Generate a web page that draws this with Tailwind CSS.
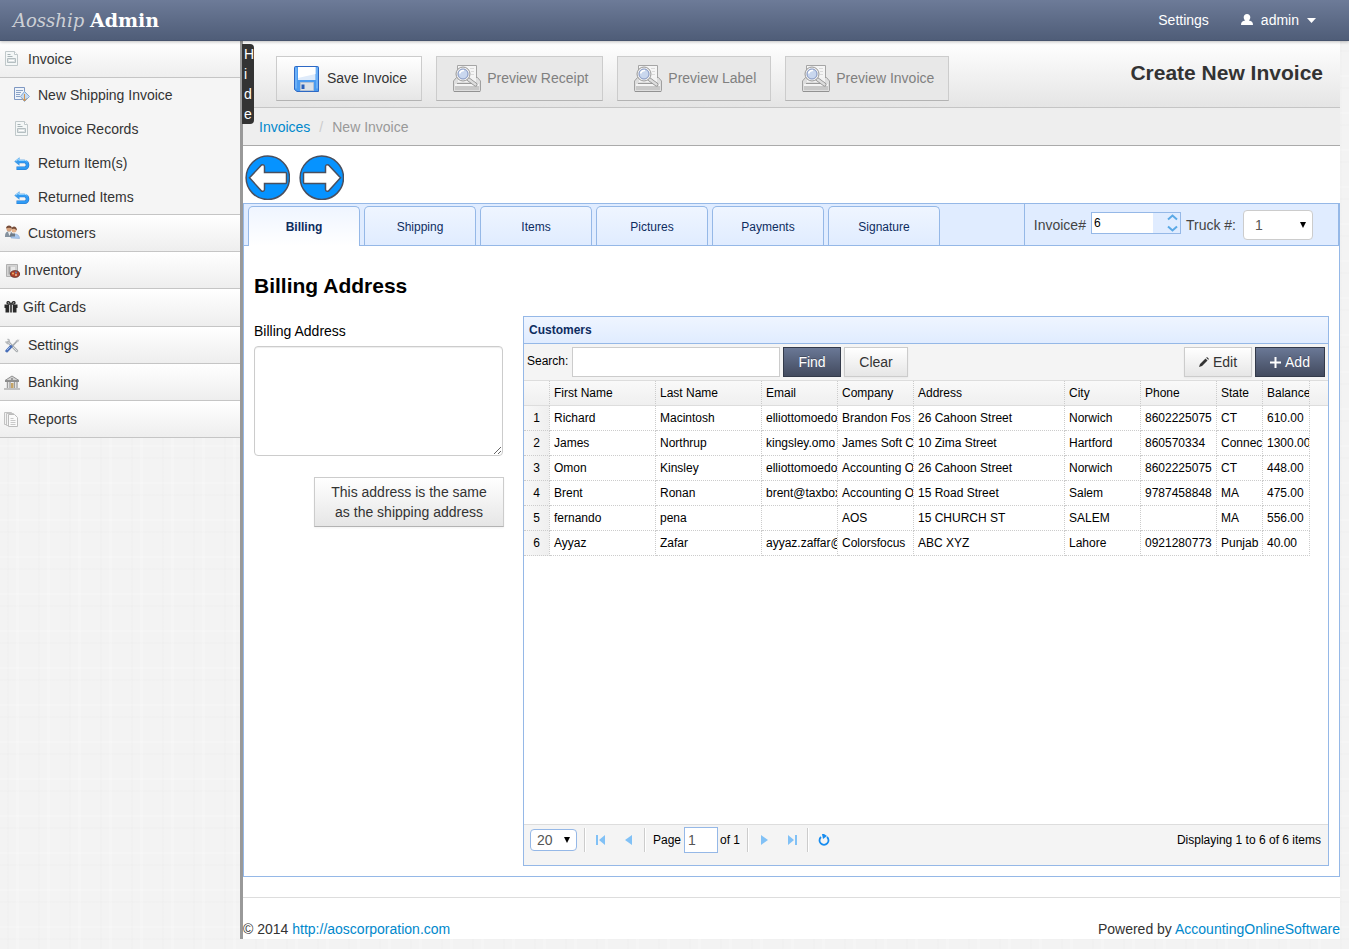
<!DOCTYPE html>
<html lang="en">

<head>
  <meta charset="UTF-8" />
  <meta name="viewport" content="width=device-width, initial-scale=1.0" />
  <title>Aosship Admin - Create New Invoice</title>
  <script src="https://cdn.jsdelivr.net/npm/@tailwindcss/browser@4"></script>

  <style>
    /* woven paper texture behind the sidebar and page edge */
    body {
      background-color: #f3f3f3;
      background-image:
        repeating-linear-gradient(90deg, transparent 0 7px, rgba(0, 0, 0, .006) 7px 9px, transparent 9px 16px, rgba(255, 255, 255, .18) 16px 19px, transparent 19px 31px),
        repeating-linear-gradient(0deg, transparent 0 9px, rgba(0, 0, 0, .006) 9px 11px, transparent 11px 21px, rgba(255, 255, 255, .18) 21px 23px, transparent 23px 37px);
    }
  </style>
</head>

<body class="flex min-h-screen flex-col font-['Liberation_Sans',Arial,sans-serif] text-sm leading-5 text-[#333]">

  <!-- Icon sprite -->
  <svg class="hidden">
    <symbol id="i-doc" viewBox="0 0 16 16">
      <path d="M1.500.500h9l3 3v11h-12z" fill="#f4f7f7" stroke="#c0c8ca" />
      <path d="M10.500.500v3h3" fill="#fff" stroke="#c0c8ca" />
      <path d="M3.500 3.500h3M3.500 5.500h5" stroke="#a9b4b7" />
      <path d="M3.500 7.500h8v4h-8z" fill="#dde2e3" stroke="#b4bec1" />
      <path d="M5 9.500h5" stroke="#fff" />
    </symbol>
    <symbol id="i-doc-go" viewBox="0 0 16 16">
      <path d="M.500.500h10v12h-10z" fill="#eef3fa" stroke="#7f98c2" />
      <path d="M2 3.500h7M2 5.500h5M2 7.500h4M2 9.500h4" stroke="#8ba3c6" />
      <path d="M10.500 4.500l5 5-5 5-4-5z" fill="#c4daf2" stroke="#86a8d2" />
      <path d="M10.500 7v7M8.500 11.500l2 2.500 2-2.500" fill="none" stroke="#cf9350" />
    </symbol>
    <symbol id="i-return" viewBox="0 0 16 16">
      <path d="M4 6.500h6.500a3 3.400 0 0 1 0 6.800H2.500" fill="none" stroke="#2478cf" stroke-width="3.600" />
      <path d="M.300 6.500L5.500 2.300v8.400z" fill="#3c9ae8" />
      <path d="M4 6.500h6.500a3 3.400 0 0 1 0 6.800H3" fill="none" stroke="#2f9bf5" stroke-width="2.400" />
      <path d="M1.800 6.200L4.800 3.800v1.500h5.700q2 0 3 1.500" fill="none" stroke="#a6dcff" />
    </symbol>
    <symbol id="i-users" viewBox="0 0 16 16">
      <path d="M1 12c0-4 1-5.500 4-5.500s4 1.500 4 5.500z" fill="#85929e" />
      <path d="M7 13c0-3 1.500-4 4-4s4.500 1.500 4.500 4.500z" fill="#a9c8ee" stroke="#799ccb" stroke-width=".5" />
      <path d="M6 8.500h5v3H6z" fill="#6f7b86" />
      <circle cx="5" cy="4" r="2.500" fill="#d8a37e" />
      <circle cx="10" cy="5" r="2.500" fill="#e4b38d" />
      <path d="M2 3.500c0-4 6-4 6 0C6 2.500 4 2.500 2 3.500zM7.500 4.500c0-4 5.500-4 5.500 1-2-2-4-2-5.500-1z" fill="#754b37" />
      <path d="M4 7l1.500 4L7 7z" fill="#eee" />
    </symbol>
    <symbol id="i-box" viewBox="0 0 16 16">
      <path d="M2.500 2.500h11v12h-11z" fill="#d3d3d3" stroke="#b0b0b0" />
      <path d="M4.500 4.500h7v8h-7z" fill="#a5a5a5" />
      <path d="M6.500 4.500h5v6h-5z" fill="#e8e8e8" />
      <ellipse cx="11" cy="12" rx="4.500" ry="3.300" fill="#b3442b" stroke="#6b3832" />
      <circle cx="9" cy="11.500" r="1" fill="#efb66b" /><circle cx="12" cy="10.500" r="1" fill="#6681b4" /><circle cx="12" cy="13" r="1" fill="#e8c5a0" />
    </symbol>
    <symbol id="i-gift" viewBox="0 0 14 14">
      <path d="M.500 4.500h4.700v3.500H.500zM8.800 4.500h4.700v3.500H8.800zM1.500 8h3.700v4.500H1.500zM8.800 8h3.700v4.500H8.800zM6.200 4.500h1.600v8H6.200z" fill="#292929" />
      <path d="M6.500 4C4.500 4.300 2.700 4 3 2.700S5.500 1 6.500 4zM7.500 4C9.500 4.300 11.300 4 11 2.700S8.500 1 7.500 4z" fill="none" stroke="#292929" stroke-width="1.300" />
    </symbol>
    <symbol id="i-tools" viewBox="0 0 16 16">
      <path d="M4 5l9 9" stroke="#a9adb0" stroke-width="2.500" stroke-linecap="round" />
      <path d="M4 5l9 9" stroke="#e2e4e6" stroke-linecap="round" />
      <path d="M1.500 4.500L3.500 6.500 5.500 5.500 5 3 3.500 2" fill="none" stroke="#b6b9bc" stroke-width="1.500" />
      <path d="M14 3L8 9.500" stroke="#a4a9ad" stroke-width="1.600" />
      <path d="M11.500 3.500l2.500 2 1.500-3z" fill="#c2c4c6" />
      <path d="M7 9.500L2.800 14" stroke="#496fb9" stroke-width="3" stroke-linecap="round" />
      <path d="M6 10L3 13" stroke="#9db8e8" />
    </symbol>
    <symbol id="i-bank" viewBox="0 0 16 16">
      <path d="M1 6.500L8 2l7 4.500z" fill="#d3d3d3" stroke="#8f8f8f" />
      <path d="M2 7h12v7H2z" fill="#eee" />
      <path d="M3.500 7v7M6 7v7M10.500 7v7M13 7v7" stroke="#9d9d9d" stroke-width="1.300" />
      <path d="M7 9h2.500v5H7z" fill="#c5a466" />
      <path d="M1 7.500h14M0 15h16" stroke="#8d8d8d" />
      <circle cx="8" cy="5" r="1" fill="#888" />
    </symbol>
    <symbol id="i-reports" viewBox="0 0 16 16">
      <path d="M.500 1.500h7v12h-7z" fill="#f3f3f3" stroke="#c2c2c2" />
      <path d="M2.500 2.500h7v12h-7z" fill="#f3f3f3" stroke="#c2c2c2" />
      <path d="M4.500 3.500h6l3 3v9h-9z" fill="#fafafa" stroke="#bbb" />
      <path d="M6.500 7.500h3M6.500 9.500h5M6.500 11.500h5M6.500 13.500h5" stroke="#c8c8c8" />
    </symbol>
    <symbol id="i-preview" viewBox="0 0 30 30">
      <path d="M5.500 2.500h19v17h-19z" fill="#f5f5f5" stroke="#a5a5a5" />
      <path d="M18 5.500h4M19 8.500h3M19 11.500h3" stroke="#dadada" />
      <path d="M1.500 18l3-3.500h21l3 3.500v9.500q0 1-1 1h-25q-1 0-1-1z" fill="#dedede" stroke="#a0a0a0" />
      <path d="M6 14h18v5H6z" fill="#f2f2f2" />
      <path d="M5 20.500h20" stroke="#9a9a9a" /><path d="M3 23h24v4H3z" fill="#c8c8c8" /><path d="M3 22h24" stroke="#f4f4f4" stroke-width="2" />
      <path d="M2 28.500h26" stroke="#929292" />
      <path d="M16 16l7.500 5.500" stroke="#8d8d8d" stroke-width="4" stroke-linecap="round" />
      <path d="M16 16l7.500 5.500" stroke="#ddd" stroke-width="2.400" stroke-linecap="round" />
      <circle cx="11" cy="11" r="7" fill="#eee" stroke="#999" />
      <circle cx="11" cy="11" r="5" fill="#c9d7ee" stroke="#8295c2" />
      <path d="M7.500 10.500q1-3.500 4.500-3" fill="none" stroke="#fff" stroke-width="1.500" />
    </symbol>
  </svg>

  <!-- Top bar -->
  <header class="relative z-10 flex h-[41px] items-center justify-between border-b border-[#47546d] bg-linear-to-b from-[#6d7b98] to-[#4f5d78] pr-[33px] pl-[13px] text-white shadow-[0_1px_3px_rgba(0,0,0,0.25)]">
    <a href="#" class="font-['DejaVu_Serif',serif] text-lg leading-5"><i class="text-[#cdd0d6]">Aosship</i> <b class="text-[19px]">Admin</b></a>
    <nav class="flex items-center gap-8">
      <a href="#">Settings</a>
      <a href="#" class="flex items-center">
        <svg class="mr-2 size-3" viewBox="0 0 12 12" fill="#fff"><path d="M6 0C4 0 2.700 1.300 2.700 3.200c0 1.300.6 2.500 1.500 3.300C1.500 7 0 8 0 11h12c0-3-1.500-4-4.200-4.500.9-.8 1.500-2 1.500-3.300C9.300 1.300 8 0 6 0z" /></svg>
        admin
        <svg class="ml-2 h-[5px] w-[9px]" viewBox="0 0 9 5" fill="#fff"><path d="M0 0h9L4.500 5z" /></svg>
      </a>
    </nav>
  </header>

  <div class="mb-[10px] flex flex-1">
    <!-- Sidebar -->
    <aside class="w-60 shrink-0">
      <nav class="[&>a]:flex [&>a]:h-[37px] [&>a]:items-center [&>a]:gap-2 [&>a]:border-b [&>a]:border-[#c5c5c5] [&>a]:bg-linear-to-b [&>a]:from-white [&>a]:to-[#eee] [&>a]:pl-1">
        <a href="#"><svg class="size-4"><use href="#i-doc" /></svg>Invoice</a>
        <div class="border-b border-[#c5c5c5] bg-[#f5f5f5] [&>a]:flex [&>a]:h-[34px] [&>a]:items-center [&>a]:gap-2 [&>a]:pl-[14px]">
          <a href="#"><svg class="size-4"><use href="#i-doc-go" /></svg>New Shipping Invoice</a>
          <a href="#"><svg class="size-4"><use href="#i-doc" /></svg>Invoice Records</a>
          <a href="#"><svg class="size-4"><use href="#i-return" /></svg>Return Item(s)</a>
          <a href="#"><svg class="size-4"><use href="#i-return" /></svg>Returned Items</a>
        </div>
        <a href="#"><svg class="size-4"><use href="#i-users" /></svg>Customers</a>
        <a href="#" class="gap-1!"><svg class="size-4"><use href="#i-box" /></svg>Inventory</a>
        <a href="#" class="h-[38px]! gap-[5px]! pb-px"><svg class="size-[14px]"><use href="#i-gift" /></svg>Gift Cards</a>
        <a href="#"><svg class="size-4"><use href="#i-tools" /></svg>Settings</a>
        <a href="#"><svg class="size-4"><use href="#i-bank" /></svg>Banking</a>
        <a href="#"><svg class="size-4"><use href="#i-reports" /></svg>Reports</a>
      </nav>
    </aside>

    <!-- Main -->
    <main class="relative mr-[9px] flex min-w-0 flex-1 flex-col border-l-[3px] border-[#999] bg-white">
      <button class="absolute top-[3px] -left-px z-10 w-3 rounded-r-sm bg-[#333] pl-[2px] text-left text-sm leading-5 text-white">H<br>i<br>d<br>e</button>

      <!-- Page actions -->
      <div class="flex h-[67px] justify-between border-b border-[#c5c5c5] bg-linear-to-b from-white to-[#e5e5e5] pr-[17px] pl-[33px]">
        <div class="flex items-center gap-[14px] pt-[9px] [&>button]:flex [&>button]:h-[45px] [&>button]:items-center [&>button]:gap-[5px] [&>button]:border [&>button]:border-[#ccc] [&>button]:border-b-[#b3b3b3] [&>button]:pr-[14px] [&>button]:pb-px [&>button]:pl-[15px] [&>button:disabled]:bg-[#e8e8e8] [&>button:disabled]:text-[#808080]">
          <button class="bg-linear-to-b from-white to-[#e6e6e6]">
            <svg class="size-[30px]" viewBox="0 0 30 30">
              <path d="M2.500 4.500q0-1 1-1h22q1 0 1 1v24H5l-2.500-2z" fill="#4b9bf0" stroke="#2d68c4" />
              <path d="M6 4h17.500v13H6z" fill="#dfebfa" /><path d="M6 4h17.500v7L6 15z" fill="#fff" />
              <path d="M4 4.500v21M25 4.500v21" stroke="#8cc5ff" />
              <path d="M8.500 19.500h13v8h-13z" fill="#dde1e6" stroke="#b4c2d4" />
              <path d="M9.500 21.500h3v4.500h-3z" fill="#2a60b9" />
            </svg>Save Invoice
          </button>
          <button disabled><svg class="size-[30px]"><use href="#i-preview" /></svg>Preview Receipt</button>
          <button disabled><svg class="size-[30px]"><use href="#i-preview" /></svg>Preview Label</button>
          <button disabled><svg class="size-[30px]"><use href="#i-preview" /></svg>Preview Invoice</button>
        </div>
        <h1 class="pt-[22px] text-[21px] leading-5 font-bold">Create New Invoice</h1>
      </div>

      <!-- Breadcrumb -->
      <nav class="flex h-[38px] items-center gap-[9px] border-b border-[#aaa] bg-[#eee] pl-4">
        <a href="#" class="text-[#08c]">Invoices</a>
        <span class="text-[#ccc]">/</span>
        <span class="text-[#999]">New Invoice</span>
      </nav>

      <div class="flex gap-[9px] pt-[9px] pb-[3px] pl-[2px]">
        <button aria-label="Previous"><svg class="size-[45px]" viewBox="0 0 45 45" stroke="#4a4f5e" stroke-width="1.500"><circle cx="22.800" cy="22.800" r="21.700" fill="#0693ff" /><path d="M4.500 22.800L16.500 10q3-1 3 2v5.500H40.500q1 0 1 1v9q0 1-1 1H19.500v5.500q0 3-3 2z" fill="#fff" /></svg></button>
        <button aria-label="Next"><svg class="size-[45px]" viewBox="0 0 45 45" stroke="#4a4f5e" stroke-width="1.500"><circle cx="22.800" cy="22.800" r="21.700" fill="#0693ff" /><path d="M41.500 22.800L29.500 10q-3-1-3 2v5.500H5.500q-1 0-1 1v9q0 1 1 1h21v5.500q0 3 3 2z" fill="#fff" /></svg></button>
      </div>

      <section class="flex flex-1 flex-col border border-[#95b8e7] text-black">
        <!-- Tabs -->
        <div class="flex h-[42px] justify-between border-r border-b border-[#95b8e7] bg-[#e0ecff]">
          <div role="tablist" class="flex gap-1 pt-[2px] pl-1 text-xs text-[#0e2d5f] [&>button]:w-28 [&>button]:rounded-t-[5px] [&>button]:border [&>button]:border-b-0 [&>button]:border-[#95b8e7] [&>button]:bg-linear-to-b [&>button]:from-[#eff5ff] [&>button]:to-[#e0ecff] [&>button]:pt-px">
            <button role="tab" aria-selected="true" class="-mb-px to-white! font-bold">Billing</button>
            <button role="tab">Shipping</button>
            <button role="tab">Items</button>
            <button role="tab">Pictures</button>
            <button role="tab">Payments</button>
            <button role="tab">Signature</button>
          </div>
          <div class="flex items-center gap-[5px] border-l border-[#95b8e7] pr-[25px] pl-[9px] text-[#444]">
            <label for="invoiceNo">Invoice#</label>
            <span class="mb-1 flex h-[22px] w-[90px] justify-between border border-[#95b8e7] bg-[#e0ecff]">
              <input id="invoiceNo" value="6" class="w-[61px] bg-white px-[2px] text-xs text-black" />
              <svg class="mr-[2px] h-5 w-[11px]" viewBox="0 0 11 20" fill="none" stroke="#5ba9e6" stroke-width="2"><path d="M1 6.500l4.500-4L10 6.500M1 13.500l4.500 4L10 13.500" /></svg>
            </span>
            <label for="truckNo" class="mr-[2px]">Truck #:</label>
            <span class="relative">
              <select id="truckNo" class="h-[30px] w-[70px] appearance-none rounded border border-[#ccc] bg-white pl-[11px] text-sm text-[#555]"><option>1</option></select>
              <svg class="pointer-events-none absolute top-3 right-[7px] h-[6px] w-[6px]" viewBox="0 0 6 6"><path d="M0 0h6L3 6z" /></svg>
            </span>
          </div>
        </div>

        <div class="flex flex-1 flex-col pt-5 pr-[10px] pb-[10px] pl-[10px]">
          <h2 class="text-[21px] leading-10 font-bold">Billing Address</h2>
          <div class="mt-[10px] flex flex-1 gap-[19px]">
            <div class="flex w-[250px] shrink-0 flex-col pt-[5px]">
              <label for="billing" class="mb-[5px]">Billing Address</label>
              <textarea id="billing" class="h-[110px] w-[249px] rounded border border-[#ccc] bg-white px-2 shadow-[inset_0_1px_1px_rgba(0,0,0,0.075)]"></textarea>
              <button class="mt-[21px] ml-auto h-[50px] w-[190px] border border-[#ccc] border-b-[#b3b3b3] bg-linear-to-b from-white to-[#e6e6e6] px-3 text-[#333] shadow-[0_1px_2px_rgba(0,0,0,0.05)]">This address is the same as the shipping address</button>
            </div>

            <!-- Customers grid -->
            <div class="flex min-w-0 flex-1 flex-col border border-[#95b8e7] text-xs">
              <h3 class="h-[27px] border-b border-[#95b8e7] bg-linear-to-b from-[#eff5ff] to-[#e0ecff] pl-[5px] leading-[26px] font-bold text-[#0e2d5f]">Customers</h3>
              <div class="flex h-[37px] items-center border-b border-[#ddd] bg-[#f4f4f4] pr-[3px] pl-[3px]">
                <label for="search" class="mr-[3px] w-[42px] pb-[2px]">Search:</label>
                <input id="search" class="mr-[3px] h-[30px] w-[208px] border border-[#ccc] bg-white px-2 text-sm" />
                <button class="h-[30px] w-[58px] border border-[#333a4a] bg-linear-to-b from-[#6a7896] to-[#434b5f] text-sm text-white [text-shadow:0_-1px_0_rgba(0,0,0,0.25)]">Find</button>
                <button class="ml-[3px] h-[30px] w-16 border border-[#ccc] bg-linear-to-b from-white to-[#e6e6e6] text-sm text-[#333] shadow-[0_1px_2px_rgba(0,0,0,0.05)]">Clear</button>
                <button class="mr-[3px] ml-auto flex h-[30px] w-[68px] items-center justify-center gap-1 border border-[#ccc] bg-linear-to-b from-white to-[#e6e6e6] text-sm text-[#333] shadow-[0_1px_2px_rgba(0,0,0,0.05)]">
                  <svg class="size-[10px]" viewBox="0 0 10 10" fill="#333"><path d="M0 10l1-3L6.500 1.500l2 2L3 9zM7.200.800L8 0l2 2-.8.800z" /></svg>Edit
                </button>
                <button class="flex h-[30px] w-[70px] items-center justify-center gap-1 border border-[#333a4a] bg-linear-to-b from-[#6a7896] to-[#434b5f] text-sm text-white [text-shadow:0_-1px_0_rgba(0,0,0,0.25)]">
                  <svg class="size-[11px]" viewBox="0 0 11 11" stroke="#fff" stroke-width="2"><path d="M5.500 0v11M0 5.500h11" /></svg>Add
                </button>
              </div>

              <div class="flex-1">
                <table class="w-full table-fixed border-separate border-spacing-0 text-left leading-6 whitespace-nowrap [&_td]:h-[25px] [&_td]:overflow-hidden [&_td]:border-r [&_td]:border-b [&_td]:border-dotted [&_td]:border-[#ccc] [&_td]:pl-1 [&_td:first-child]:bg-linear-to-r [&_td:first-child]:from-[#f8f8f8] [&_td:first-child]:to-[#efefef] [&_td:first-child]:pl-0 [&_td:first-child]:text-center [&_td:last-child]:border-0 [&_th]:h-[25px] [&_th]:overflow-hidden [&_th]:border-r [&_th]:border-b [&_th]:border-[#ccc] [&_th]:border-b-[#ddd] [&_th]:[border-right-style:dotted] [&_th]:pl-1 [&_th]:font-normal [&_th:last-child]:border-r-0">
                  <colgroup>
                    <col class="w-[26px]"><col class="w-[106px]"><col class="w-[106px]"><col class="w-[76px]"><col class="w-[76px]"><col class="w-[151px]"><col class="w-[76px]"><col class="w-[76px]"><col class="w-[46px]"><col class="w-[47px]"><col>
                  </colgroup>
                  <thead class="bg-linear-to-b from-[#f9f9f9] to-[#efefef]">
                    <tr><th></th><th>First Name</th><th>Last Name</th><th>Email</th><th>Company</th><th>Address</th><th>City</th><th>Phone</th><th>State</th><th>Balance</th><th></th></tr>
                  </thead>
                  <tbody>
                    <tr><td>1</td><td>Richard</td><td>Macintosh</td><td>elliottomoedo</td><td>Brandon Fos</td><td>26 Cahoon Street</td><td>Norwich</td><td>8602225075</td><td>CT</td><td>610.00</td><td></td></tr>
                    <tr><td>2</td><td>James</td><td>Northrup</td><td>kingsley.omo</td><td>James Soft C</td><td>10 Zima Street</td><td>Hartford</td><td>860570334</td><td>Connec</td><td>1300.00</td><td></td></tr>
                    <tr><td>3</td><td>Omon</td><td>Kinsley</td><td>elliottomoedo</td><td>Accounting O</td><td>26 Cahoon Street</td><td>Norwich</td><td>8602225075</td><td>CT</td><td>448.00</td><td></td></tr>
                    <tr><td>4</td><td>Brent</td><td>Ronan</td><td>brent@taxbox</td><td>Accounting O</td><td>15 Road Street</td><td>Salem</td><td>9787458848</td><td>MA</td><td>475.00</td><td></td></tr>
                    <tr><td>5</td><td>fernando</td><td>pena</td><td></td><td>AOS</td><td>15 CHURCH ST</td><td>SALEM</td><td></td><td>MA</td><td>556.00</td><td></td></tr>
                    <tr><td>6</td><td>Ayyaz</td><td>Zafar</td><td>ayyaz.zaffar@</td><td>Colorsfocus</td><td>ABC XYZ</td><td>Lahore</td><td>0921280773</td><td>Punjab</td><td>40.00</td><td></td></tr>
                  </tbody>
                </table>
              </div>

              <!-- Pager -->
              <div class="flex h-[41px] items-center border-t border-[#ddd] bg-[#f4f4f4] pr-[7px] pb-[11px] pl-[6px]">
                <span class="relative mr-[7px]">
                  <select aria-label="Page size" class="h-[22px] w-[47px] appearance-none rounded border border-[#95b8e7] bg-white pl-[6px] text-sm leading-5 text-[#555]"><option>20</option></select>
                  <svg class="pointer-events-none absolute top-2 right-[7px] h-[6px] w-[6px]" viewBox="0 0 6 6"><path d="M0 0h6L3 6z" /></svg>
                </span>
                <div class="h-6 w-[2px] border-r border-l border-r-white border-l-[#ccc]"></div>
                <button aria-label="First page" class="ml-[10px]"><svg class="h-[10px] w-[9px]" viewBox="0 0 9 10" fill="#81c1f6"><path d="M0 0h2v10H0zM9 0v10L3 5z" /></svg></button>
                <button aria-label="Previous page" class="ml-5"><svg class="h-[10px] w-[7px]" viewBox="0 0 7 10" fill="#81c1f6"><path d="M7 0v10L0 5z" /></svg></button>
                <div class="ml-3 h-6 w-[2px] border-r border-l border-r-white border-l-[#ccc]"></div>
                <label for="page" class="ml-[7px] w-[31px]">Page</label>
                <input id="page" value="1" class="mr-[2px] h-[26px] w-[34px] border border-[#95b8e7] bg-white px-[3px] text-sm text-[#555]" />
                <span>of 1</span>
                <div class="ml-[7px] h-6 w-[2px] border-r border-l border-r-white border-l-[#ccc]"></div>
                <button aria-label="Next page" class="ml-3"><svg class="h-[10px] w-[7px]" viewBox="0 0 7 10" fill="#81c1f6"><path d="M0 0v10l7-5z" /></svg></button>
                <button aria-label="Last page" class="ml-5"><svg class="h-[10px] w-[9px]" viewBox="0 0 9 10" fill="#81c1f6"><path d="M7 0h2v10H7zM0 0v10l6-5z" /></svg></button>
                <div class="ml-[10px] h-6 w-[2px] border-r border-l border-r-white border-l-[#ccc]"></div>
                <button aria-label="Refresh" class="ml-[9px]"><svg class="size-3" viewBox="0 0 12 12"><path d="M3 3a4.500 4.500 0 1 0 6 0" fill="none" stroke="#168cf0" stroke-width="1.800" /><path d="M4 0h2l3 2-4 3z" fill="#168cf0" /></svg></button>
                <span class="ml-auto">Displaying 1 to 6 of 6 items</span>
              </div>
            </div>
          </div>
        </div>
      </section>

      <footer class="mt-5 flex justify-between border-t border-[#ddd] pt-[21px]">
        <span>© 2014 <a href="#" class="text-[#08c]">http://aoscorporation.com</a></span>
        <span>Powered by <a href="#" class="text-[#08c]">AccountingOnlineSoftware</a></span>
      </footer>
    </main>
  </div>

</body>

</html>
